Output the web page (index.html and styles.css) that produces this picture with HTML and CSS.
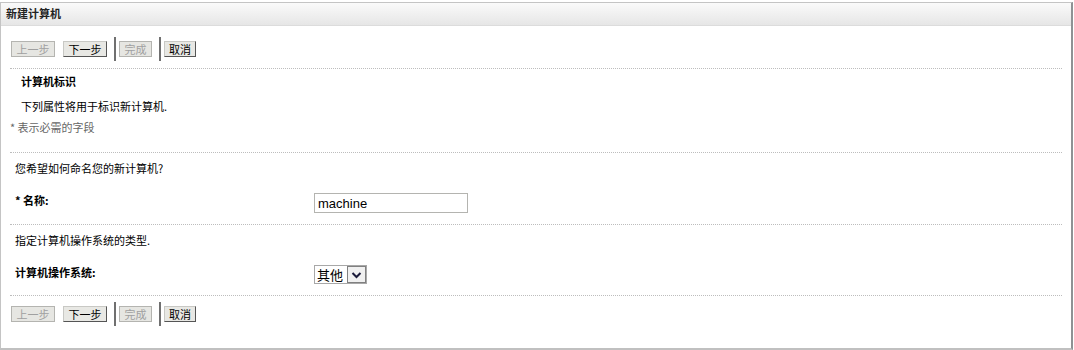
FILE: index.html
```html
<!DOCTYPE html>
<html lang="zh-CN">
<head>
  <meta charset="UTF-8">
  <title>新建计算机</title>
  <link rel="stylesheet" href="styles.css">
</head>
<body>
  <div class="panel">
    <div class="panel-header">新建计算机</div>
    <div class="panel-body">
      <div class="toolbar">
        <button class="btn wide" disabled>上一步</button>
        <button class="btn wide">下一步</button>
        <span class="sep"></span>
        <button class="btn" disabled>完成</button>
        <span class="sep"></span>
        <button class="btn">取消</button>
      </div>

      <div class="section intro">
        <div class="title">计算机标识</div>
        <div class="desc">下列属性将用于标识新计算机.</div>
        <div class="note">* 表示必需的字段</div>
      </div>

      <div class="section">
        <div class="question">您希望如何命名您的新计算机?</div>
        <div class="row">
          <label class="label" for="name">* 名称:</label>
          <input type="text" id="name" class="field" value="machine">
        </div>
      </div>

      <div class="section">
        <div class="question">指定计算机操作系统的类型.</div>
        <div class="row os-row">
          <label class="label" for="os">计算机操作系统:</label>
          <div class="select">
            <select id="os">
              <option>其他</option>
            </select>
            <span class="arrow">
              <svg width="11" height="8" viewBox="0 0 11 8"><path d="M1.5 2 L5.5 6 L9.5 2" fill="none" stroke="#1a1a3a" stroke-width="2"/></svg>
            </span>
          </div>
        </div>
      </div>

      <div class="toolbar bottom">
        <button class="btn wide" disabled>上一步</button>
        <button class="btn wide">下一步</button>
        <span class="sep"></span>
        <button class="btn" disabled>完成</button>
        <span class="sep"></span>
        <button class="btn">取消</button>
      </div>
    </div>
  </div>
</body>
</html>
```

FILE: styles.css
```css
body {
  margin: 0;
  font-family: "Noto Sans CJK SC", "Liberation Sans", sans-serif;
  font-size: 11px;
  color: #000;
  background: #fff;
}

.panel {
  margin-top: 2px;
  width: 1070px;
  height: 345px;
  border: 1px solid #c4c4c4;
  border-right: 2px solid #8e9294;
  border-bottom: 2px solid #c0c0c0;
}

.panel-header {
  height: 22px;
  line-height: 21px;
  padding-left: 5px;
  font-weight: bold;
  color: #222;
  background: linear-gradient(#fafafa, #e6e6e6);
  border-bottom: 1px solid #dcdcdc;
}

.panel-body {
  padding: 0 9px;
}

.toolbar {
  display: flex;
  align-items: center;
  height: 24px;
  padding: 11px 0 7px 1px;
  border-bottom: 1px dotted #bdbdbd;
}

.toolbar.bottom {
  padding-top: 6px;
  border-bottom: none;
}

.btn {
  box-sizing: border-box;
  width: 33px;
  height: 16px;
  padding: 0;
  margin-right: 8px;
  font-family: inherit;
  font-size: 11px;
  line-height: 13px;
  color: #000;
  background: #e8e8e4;
  border: 1px solid;
  border-color: #c8c8c4 #555 #555 #c8c8c4;
  border-radius: 0;
}

.btn.wide {
  width: 44px;
}

.btn.wide + .btn.wide {
  margin-right: 7px;
}

.btn:last-child {
  width: 32px;
}

.btn:disabled {
  color: #a0a0a0;
  border-color: #b4b4b0;
  background: #e6e6e2;
}

.sep {
  width: 2px;
  height: 24px;
  margin-right: 3px;
  background: #707070;
}

.btn:disabled + .sep {
  margin-left: -1px;
}

.section {
  border-bottom: 1px dotted #bdbdbd;
}

.intro {
  padding: 4px 0 17px;
}

.title {
  padding-left: 11px;
  line-height: 16px;
  font-weight: bold;
}

.desc {
  padding-left: 11px;
  margin-top: 9px;
  line-height: 16px;
}

.note {
  margin-top: 5px;
  line-height: 16px;
  color: #666;
}

.question {
  padding: 7px 0 0 5px;
  line-height: 16px;
}

.row {
  display: flex;
  align-items: flex-start;
  padding: 17px 0 11px 5px;
}

.label {
  width: 299px;
  line-height: 14px;
  padding-top: 0;
  font-weight: bold;
}

.field {
  width: 146px;
  height: 18px;
  padding: 0 3px;
  margin: 0;
  font-family: "Liberation Sans", sans-serif;
  font-size: 13px;
  border: 1px solid #b4b4b0;
  outline: none;
}

.select {
  display: flex;
  height: 17px;
  border: 1px solid #a8a8a8;
}

.select select {
  appearance: none;
  width: 32px;
  height: 17px;
  padding: 0 0 0 2px;
  margin: 0;
  font-family: "Noto Sans CJK SC", sans-serif;
  font-size: 13px;
  line-height: 17px;
  border: none;
  background: #fff;
}

.arrow {
  display: flex;
  align-items: center;
  justify-content: center;
  width: 17px;
  height: 15px;
  background: #f0f0f0;
  border: 1px solid #808080;
}
```
